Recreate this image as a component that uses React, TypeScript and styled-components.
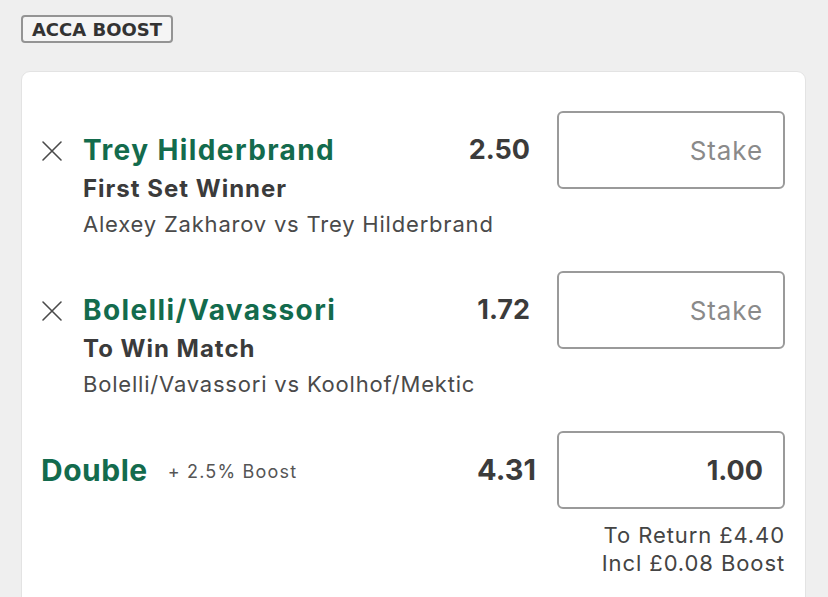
import styled, { createGlobalStyle } from 'styled-components';

const GREEN = '#136b4d';
const DARK = '#3b3b3b';

const SELECTIONS = [
  { name: 'Trey Hilderbrand', market: 'First Set Winner', event: 'Alexey Zakharov vs Trey Hilderbrand', odds: '2.50' },
  { name: 'Bolelli/Vavassori', market: 'To Win Match', event: 'Bolelli/Vavassori vs Koolhof/Mektic', odds: '1.72' },
];

const GlobalStyle = createGlobalStyle`
  html, body {
    margin: 0;
    padding: 0;
    background: #efefef;
    font-family: Inter, "Liberation Sans", Arial, sans-serif;
    overflow: hidden;
  }
`;

const CloseIcon = () => (
  <svg width="22" height="22" viewBox="0 0 22 22" fill="none">
    <path d="M2 2L20 20M20 2L2 20" stroke="#4a4a4a" strokeWidth="1.6" strokeLinecap="round" />
  </svg>
);

export default function App() {
  return (
    <>
      <GlobalStyle />
      <Page>
        <Badge>ACCA BOOST</Badge>
        <Card>
          {SELECTIONS.map((s) => (
            <SelectionRow key={s.name}>
              <RemoveButton>
                <CloseIcon />
              </RemoveButton>
              <Info>
                <SelectionName>{s.name}</SelectionName>
                <Market>{s.market}</Market>
                <EventName>{s.event}</EventName>
              </Info>
              <Odds>{s.odds}</Odds>
              <StakeInput placeholder="Stake" />
            </SelectionRow>
          ))}
          <MultipleRow>
            <MultipleHeader>
              <MultipleLabel>Double</MultipleLabel>
              <BoostNote>+ 2.5% Boost</BoostNote>
              <Odds $large>4.31</Odds>
            </MultipleHeader>
            <StakeColumn>
              <StakeInput $filled defaultValue="1.00" />
              <Returns>
                <div>To Return £4.40</div>
                <div>Incl £0.08 Boost</div>
              </Returns>
            </StakeColumn>
          </MultipleRow>
        </Card>
      </Page>
    </>
  );
}

const Page = styled.div`
  padding: 15px 22px 0 21px;
  display: flex;
  flex-direction: column;
  align-items: flex-start;
`;

const Badge = styled.div`
  box-sizing: border-box;
  height: 28px;
  width: 152px;
  display: flex;
  align-items: center;
  justify-content: center;
  border: 2px solid #949494;
  border-radius: 4px;
  background: #f5f5f5;
  color: #333;
  font-family: "DejaVu Sans", sans-serif;
  font-weight: 700;
  font-size: 18px;
`;

const Card = styled.div`
  box-sizing: border-box;
  margin-top: 28px;
  width: 785px;
  min-height: 560px;
  padding: 39px 20px 0 19px;
  background: #fff;
  border: 1px solid #e3e3e3;
  border-radius: 9px;
  display: flex;
  flex-direction: column;
  gap: 33px;
`;

const SelectionRow = styled.div`
  display: flex;
  align-items: flex-start;
`;

const RemoveButton = styled.div`
  width: 22px;
  height: 22px;
  margin-top: 29px;
  margin-right: 20px;
  flex-shrink: 0;
`;

const Info = styled.div`
  flex: 1;
  min-width: 0;
  padding-top: 23px;
  display: flex;
  flex-direction: column;
`;

const SelectionName = styled.div`
  color: ${GREEN};
  font-weight: 700;
  font-size: 28px;
  line-height: 32px;
  letter-spacing: 1.4px;
  white-space: nowrap;
`;

const Market = styled.div`
  margin-top: 9px;
  color: ${DARK};
  font-weight: 700;
  font-size: 24px;
  line-height: 28px;
  letter-spacing: 1px;
  white-space: nowrap;
`;

const EventName = styled.div`
  margin-top: 7px;
  color: #4a4a4a;
  font-size: 22px;
  line-height: 28px;
  letter-spacing: 0.8px;
  white-space: nowrap;
`;

const Odds = styled.div<{ $large?: boolean }>`
  padding-top: ${({ $large }) => ($large ? 0 : 23)}px;
  margin-right: ${({ $large }) => ($large ? 21 : 27)}px;
  color: ${DARK};
  font-weight: 700;
  font-size: ${({ $large }) => ($large ? 29 : 27)}px;
  line-height: 32px;
`;

const StakeInput = styled.input<{ $filled?: boolean }>`
  box-sizing: border-box;
  width: 228px;
  height: 78px;
  flex-shrink: 0;
  padding: 0 20px;
  border: 2px solid #9a9a9a;
  border-radius: 6px;
  background: #fff;
  text-align: right;
  font-family: inherit;
  font-size: ${({ $filled }) => ($filled ? 27 : 26)}px;
  font-weight: ${({ $filled }) => ($filled ? 700 : 400)};
  letter-spacing: ${({ $filled }) => ($filled ? 0 : 0.9)}px;
  color: ${DARK};
  outline: none;

  &::placeholder {
    color: #8a8a8a;
  }
`;

const MultipleRow = styled.div`
  display: flex;
  align-items: flex-start;
`;

const MultipleHeader = styled.div`
  flex: 1;
  height: 78px;
  display: flex;
  align-items: center;
`;

const MultipleLabel = styled.div`
  color: ${GREEN};
  font-weight: 700;
  font-size: 30px;
  letter-spacing: 0.5px;
`;

const BoostNote = styled.div`
  flex: 1;
  margin-left: 20px;
  padding-top: 2px;
  color: #555;
  font-size: 18px;
  letter-spacing: 1.2px;
`;

const StakeColumn = styled.div`
  display: flex;
  flex-direction: column;
  align-items: flex-end;
`;

const Returns = styled.div`
  margin-top: 12px;
  text-align: right;
  color: #444;
  font-size: 22px;
  line-height: 28px;
  letter-spacing: 0.9px;
`;
